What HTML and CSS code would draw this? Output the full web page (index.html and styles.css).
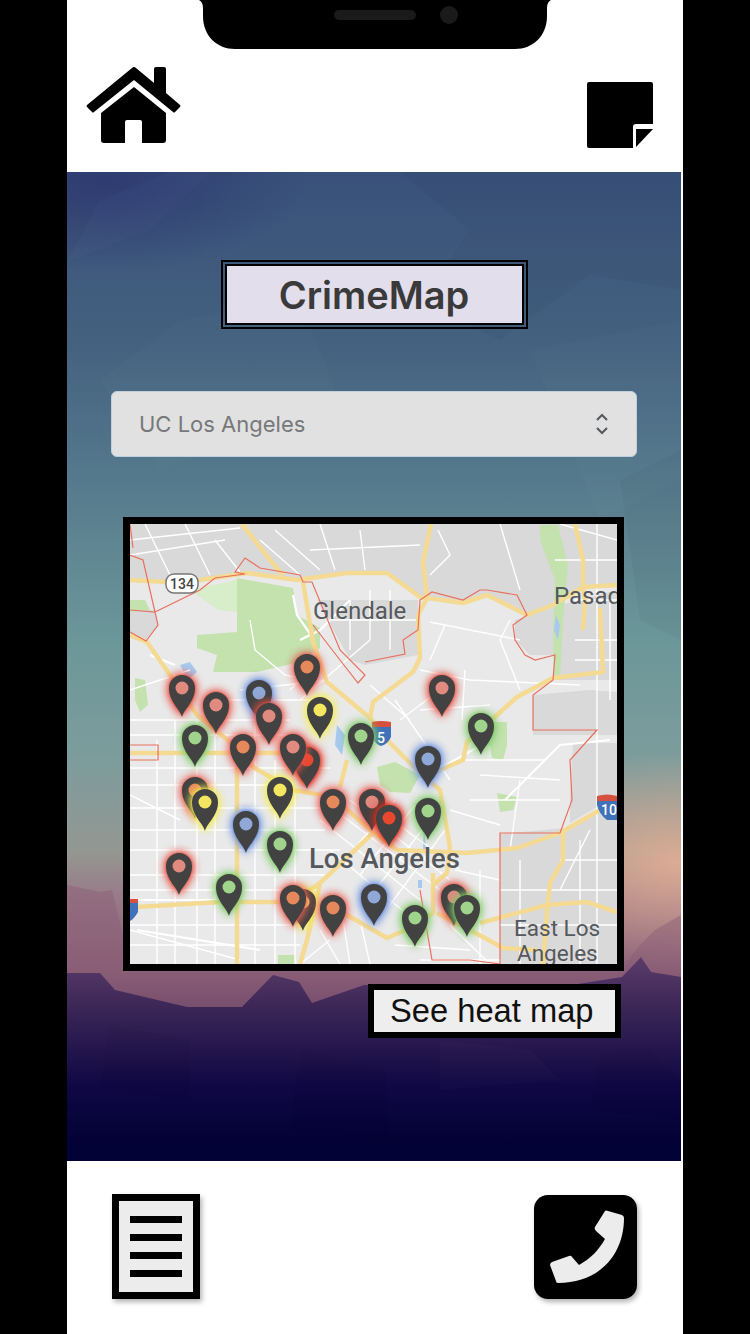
FILE: index.html
```html
<html>
  <head>
    <title>CrimeMap</title>
    <link rel="stylesheet" href="styles.css">
  </head>
  <body>
    <div id="phone">
      <svg class="notch" viewBox="0 0 352 49">
        <path d="M0 0 H352 Q348 2 348 8 V16 C348 36 334 49 316 49 H36 C18 49 4 36 4 16 V8 Q4 2 0 0 Z"/>
        <rect class="notch-part" x="135" y="10" width="82" height="10" rx="5"/>
        <circle class="notch-part" cx="250" cy="15" r="9"/>
      </svg>

      <div class="topbar">
        <svg class="home-icon" viewBox="86 66 96 78">
          <path d="M132 68 Q134 66 136 68 L154 83 V69 Q154 67 156 67 H164 Q166 67 166 69 V93 L180 105 Q181 106 180 107 L175 112 Q174 113 173 112 L134 80 L94 112 Q93 113 92 112 L87 107 Q86 106 87 105 Z"/>
          <path d="M134 87 L166 113 V140 Q166 143 163 143 H142 V122 Q142 120 140 120 H127 Q125 120 125 122 V143 H104 Q101 143 101 140 V113 Z"/>
        </svg>
        <svg class="note-icon" viewBox="0 0 66 66">
          <path d="M2 0 H64 Q66 0 66 2 V42 H49 Q46 42 46 45 V66 H2 Q0 66 0 64 V2 Q0 0 2 0 Z"/>
          <path d="M49 47 H66 L49 65 Z"/>
        </svg>
      </div>

      <div class="main">
        <!-- low poly backdrop -->
        <svg class="backdrop" viewBox="67 172 614 989">
          <defs>
            <linearGradient id="dusk" gradientUnits="userSpaceOnUse" x1="0" y1="955" x2="0" y2="1140">
              <stop offset="0" stop-color="#5c3d6c"/>
              <stop offset="0.3" stop-color="#3a2555"/>
              <stop offset="0.7" stop-color="#100845"/>
              <stop offset="1" stop-color="#030236"/>
            </linearGradient>
          </defs>
          <path class="facet-light" d="M67 172 H210 L150 230 L67 262 Z"/>
          <path class="facet-dark" d="M67 172 H170 L100 200 L67 262 Z"/>
          <path class="facet-dark" d="M400 172 H681 V290 L590 275 L500 340 L420 300 L470 230 Z"/>
          <path class="facet-light" d="M180 320 L300 300 L340 400 L160 470 L100 380 Z"/>
          <path class="facet-light" d="M530 350 L681 320 V480 L600 520 Z"/>
          <path class="facet-dark" d="M620 480 L681 450 V640 L640 620 Z"/>
          <path class="mauve" d="M67 885 L100 892 L112 890 L123 935 V975 H67 Z"/>
          <path class="mauve" d="M625 965 L640 945 L655 930 L681 915 V985 H625 Z"/>
          <path fill="url(#dusk)" d="M67 973 L100 973 L115 990 L187 1007 L242 1007 L273 975 L299 982 L312 1003 L364 985 L540 990 L622 977 L641 957 L651 972 L681 977 V1161 H67 Z"/>
          <path class="facet-dark" d="M110 1025 L190 1040 L190 1100 L100 1090 Z"/>
          <path class="facet-dark" d="M300 1050 L385 1070 L390 1140 L290 1130 Z"/>
          <path class="facet-light" d="M440 1040 L530 1050 L560 1080 L440 1090 Z"/>
          <path class="facet-dark" d="M600 1055 L650 1050 L681 1080 V1120 L590 1110 Z"/>
        </svg>

        <h1 class="title">CrimeMap</h1>

        <div class="picker">
          <span>UC Los Angeles</span>
          <svg class="picker-arrows" viewBox="0 0 14 24">
            <path d="M2 8 L7 3 L12 8 M2 16 L7 21 L12 16"/>
          </svg>
        </div>

        <div class="map-block">
          <svg class="map" viewBox="130 524 487 440">
            <defs>
              <g id="pin">
                <path class="pin-body" d="M0 0 C-2 -8 -13 -15 -13 -29 A13 13 0 0 1 13 -29 C13 -15 2 -8 0 0 Z"/>
                <circle class="pin-hole" cx="0" cy="-29" r="6.5"/>
              </g>
            </defs>

            <!-- land -->
            <rect x="130" y="524" width="487" height="440" fill="#e9e9e9"/>
            <path class="zone" d="M130 524 H617 V585 L583 587 L553 605 L527 615 L487 595 L463 603 L420 597 L387 573 L347 573 L297 580 L247 573 L200 580 L130 580 Z"/>
            <path class="zone" d="M317 600 H418 V655 L365 665 L350 660 Z"/>
            <path class="zone" d="M130 610 H155 L158 625 L145 640 L130 632 Z"/>
            <path class="zone" d="M515 620 L530 615 L560 605 L617 590 V680 L553 680 L555 655 L530 655 L515 640 Z"/>
            <path class="zone" d="M533 695 L590 690 L617 692 V735 H533 Z"/>
            <path class="zone" d="M573 743 H617 V797 L597 807 L570 823 V797 Z"/>
            <path class="zone" d="M500 834 L565 828 L570 825 L617 800 V964 H500 Z"/>

            <!-- parks -->
            <path class="park" d="M237 578 L293 588 L297 615 L320 628 L320 648 L300 662 L257 672 L213 672 L217 655 L197 648 L197 635 L237 632 Z"/>
            <path class="park-light" d="M190 590 L237 580 L237 612 L218 610 Z"/>
            <path class="park" d="M130 600 L145 600 L150 610 L130 612 Z"/>
            <path class="park" d="M540 525 H558 L568 565 L563 620 L560 680 L554 680 L553 630 L555 580 L540 540 Z"/>
            <path class="park" d="M135 678 L145 680 L148 705 L140 712 L135 700 Z"/>
            <path class="park" d="M377 767 L395 762 L420 775 L410 793 L390 792 L380 785 Z"/>
            <path class="park" d="M497 793 L517 797 L513 810 L500 812 Z"/>
            <path class="park" d="M487 722 L507 722 L507 745 L488 745 Z"/>
            <path class="park" d="M490 745 L507 745 L503 760 L492 758 Z"/>
            <path class="park" d="M278 955 H295 V964 H278 Z"/>
            <path class="water" d="M180 665 L190 662 L197 672 L188 680 Z"/>
            <path class="water" d="M337 725 L345 735 L342 755 L335 745 Z"/>
            <path class="water" d="M556 615 L560 625 L558 640 L554 630 Z"/>
            <path class="water" d="M418 880 H422 V888 H418 Z M424 818 L426 850 L423 850 Z"/>

            <!-- streets -->
            <path class="street" d="M130 540 L240 528 M145 524 L170 575 M185 524 L210 575 M130 555 L225 540 M215 540 L240 572 M260 540 L300 575 M275 530 L320 570 M320 524 L335 570 M360 530 L365 570 M310 550 L420 545 M438 530 L450 555 L430 575 M500 524 L520 590 M560 524 L617 540 M555 560 H617 M597 524 V964 M610 600 V700 M575 600 H617 M575 640 H617 M575 660 H617 M350 600 V650 M370 590 V640 M390 590 V650 M330 620 H420"/>
            <path class="street" d="M250 620 L255 650 L285 675 L307 680 M130 690 L190 670 M420 670 L470 680 L580 685 M430 622 L520 640 M445 625 L430 660 M510 620 L500 640 L520 690 M465 670 L462 720 M420 710 L490 705 M400 720 L440 690 M320 660 L290 690 M300 700 L370 640 M395 700 L450 780 M370 685 L410 720 M210 700 H330 M240 690 L330 680"/>
            <path class="street" d="M130 768 H330 M130 785 H290 M130 808 H320 M130 830 H325 M130 850 H340 M130 875 H330 M130 890 H320 M130 925 H300 M130 945 H300 M157 740 V964 M175 720 V964 M197 720 V964 M215 720 V964 M255 720 V964 M275 760 V964 M295 790 V964 M130 720 H290 M130 735 H290 M130 795 L180 820 M130 930 L240 960"/>
            <path class="street" d="M320 820 L420 900 M335 810 L440 890 M350 800 L450 880 M365 800 L460 870 M330 850 L420 925 M395 800 L345 860 M415 805 L360 875 M430 820 L375 890 M445 830 L390 905 M340 900 L350 964 M360 920 L370 964 M395 945 L470 950 M420 960 H500 M460 760 L545 760 M480 775 L560 780 M520 780 L510 850 M470 800 H560 M450 810 L500 825 M480 870 V964 M520 860 V964 M560 860 H617 M500 890 H617 M500 925 H617 M580 840 V964 M455 870 L500 880 M450 925 L490 964 M330 940 L300 964 M320 930 L340 964 M590 830 L560 890"/>
            <path class="street-major" d="M300 640 L320 630 L350 600 M420 780 L490 740 M130 900 H240 M137 930 L260 950 M293 595 L297 615 L313 638 M175 665 L150 655 M505 800 L560 745 L610 740"/>

            <!-- freeways -->
            <g class="freeway">
              <path d="M130 580 L167 582 L200 580 L247 573 L297 580 L347 573 L387 573 L420 597 L463 603 L487 595 L527 615 L553 605 L583 587 L617 585"/>
              <path d="M242 524 L270 560 L283 575 M303 582 L313 642 L327 682 L370 718 L387 740 L420 773 L440 790 L450 847"/>
              <path d="M431 524 L423 562 L427 598 L418 615 L420 658 L413 672 L373 702 L370 718"/>
              <path d="M575 524 L583 560 L583 587 L585 600 L583 630 M600 608 L603 672 L553 678 L517 697 L497 715 L467 742 L463 760 L440 770 L427 777"/>
              <path d="M130 635 L147 642 L170 675 L197 715 L230 742 L253 767 L293 790 L333 797 L370 830 L397 850 L467 853 L517 848 L560 833 L600 810 L617 800"/>
              <path d="M130 753 H287 M237 767 V964 M347 760 L340 787"/>
              <path d="M137 907 L220 902 L293 902 L320 883 L373 833 M320 883 L307 940 L300 964"/>
              <path d="M333 907 L387 938 L413 927 L433 913 L433 873 M437 913 L483 937 L503 948 L537 950"/>
              <path d="M480 923 L547 905 L587 902 L617 912 M563 833 V860 L550 883 L547 913 L543 964 M450 847 L447 873 L433 885"/>
            </g>

            <!-- city limits -->
            <path class="limit" d="M130 555 L143 560 L155 612 L130 610 M155 612 L158 625 L146 641 L130 632 M155 612 L200 590 L215 578 L245 574 L235 572 L245 558 L260 568 L300 575 L303 582 L312 582 L340 650 L365 675 L358 683 L340 660 L313 625"/>
            <path class="limit" d="M365 662 L405 654 L403 640 L418 630 L420 600 L432 592 L463 600 L480 590 L487 590 L517 595 L527 615 L513 625 L515 640 L525 655 L535 660 L555 655 L553 680 L533 695 L533 730 L597 730 L570 760 L572 800 L560 833 H500 V964"/>
            <path class="limit" d="M130 745 H158 V760 H130 M130 524 L133 548 M420 890 L432 960 H470 L500 964"/>

            <!-- shields -->
            <rect class="shield" x="166" y="574" width="32" height="19" rx="8"/>
            <text class="shield-text" x="182" y="589">134</text>
            <path class="highway-blue" d="M372 727 H391 V737 Q388 744 381 746 Q375 744 372 737 Z"/>
            <path class="highway-red" d="M372 722 Q381 720 391 722 V727 H372 Z"/>
            <text class="highway-text" x="381" y="743">5</text>
            <path class="highway-blue" d="M597 800 H617 V820 H607 Q599 814 597 805 Z"/>
            <path class="highway-red" d="M597 796 Q607 793 617 796 V801 H597 Z"/>
            <text class="highway-text" x="609" y="815">10</text>
            <path class="highway-blue" d="M130 902 H138 V912 Q134 919 130 921 Z"/>
            <path class="highway-red" d="M130 899 H138 V903 H130 Z"/>

            <!-- place names -->
            <text class="place" x="313" y="619">Glendale</text>
            <text class="place" x="554" y="604">Pasad</text>
            <text class="place place-big" x="309" y="868">Los Angeles</text>
            <text class="place place-small" x="514" y="936">East Los</text>
            <text class="place place-small" x="517" y="961">Angeles</text>

            <!-- pins, back to front -->
            <use href="#pin" class="pin red" x="182" y="717"/>
            <use href="#pin" class="pin red" x="216" y="734"/>
            <use href="#pin" class="pin blue" x="259" y="722"/>
            <use href="#pin" class="pin red" x="269" y="745"/>
            <use href="#pin" class="pin orange" x="307" y="696"/>
            <use href="#pin" class="pin yellow" x="320" y="739"/>
            <use href="#pin" class="pin red" x="442" y="717"/>
            <use href="#pin" class="pin green" x="481" y="755"/>
            <use href="#pin" class="pin green" x="195" y="767"/>
            <use href="#pin" class="pin orange" x="243" y="776"/>
            <use href="#pin" class="pin hot" x="307" y="789"/>
            <use href="#pin" class="pin red" x="293" y="776"/>
            <use href="#pin" class="pin green" x="361" y="765"/>
            <use href="#pin" class="pin blue" x="428" y="788"/>
            <use href="#pin" class="pin orange" x="195" y="819"/>
            <use href="#pin" class="pin yellow" x="205" y="831"/>
            <use href="#pin" class="pin yellow" x="280" y="819"/>
            <use href="#pin" class="pin orange" x="333" y="831"/>
            <use href="#pin" class="pin red" x="372" y="831"/>
            <use href="#pin" class="pin hot" x="389" y="847"/>
            <use href="#pin" class="pin green" x="428" y="840"/>
            <use href="#pin" class="pin blue" x="246" y="853"/>
            <use href="#pin" class="pin green" x="280" y="873"/>
            <use href="#pin" class="pin red" x="179" y="895"/>
            <use href="#pin" class="pin green" x="229" y="916"/>
            <use href="#pin" class="pin yellow" x="303" y="931"/>
            <use href="#pin" class="pin orange" x="293" y="927"/>
            <use href="#pin" class="pin orange" x="333" y="937"/>
            <use href="#pin" class="pin blue" x="374" y="926"/>
            <use href="#pin" class="pin green" x="415" y="947"/>
            <use href="#pin" class="pin red" x="454" y="926"/>
            <use href="#pin" class="pin green" x="467" y="937"/>
          </svg>
          <div class="heat-btn">See heat map</div>
        </div>
      </div>

      <div class="bottombar">
        <div class="doc-icon">
          <span></span>
          <span></span>
          <span></span>
          <span></span>
        </div>
        <div class="call-icon">
          <svg viewBox="0 0 103 104">
            <path d="M71 16 Q72 15 74 16 L88 20 Q90 21 90 23 C90 60 65 88 24 88 Q22 88 22 86 L16 70 Q16 68 18 67 L35 61 Q37 60 38 62 L45 70 C56 64 65 55 71 44 L62 36 Q60 34 61 32 Z"/>
          </svg>
        </div>
      </div>
    </div>
  </body>
</html>
```

FILE: styles.css
```css
html, body {margin: 0; padding: 0; background-color: #000;}
body {font-family: "Liberation Sans", Arial, sans-serif;}

#phone {
  position: relative;
  width: 616px;
  height: 1334px;
  margin: 0 auto;
  background-color: #fff;
  overflow: hidden;
}

/* notch sits over the top bar */
.notch {
  position: absolute;
  top: 0;
  left: 132px;
  width: 352px;
  height: 49px;
  fill: #000;
}
.notch-part {fill: #1a1a1a;}

.topbar {
  height: 172px;
  box-sizing: border-box;
  padding: 66px 30px 0 19px;
  display: flex;
  justify-content: space-between;
  align-items: flex-start;
}
.home-icon {width: 96px; height: 78px;}
.note-icon {width: 66px; height: 66px; margin-top: 16px;}

.main {
  position: relative;
  width: 614px;
  height: 989px;
  box-sizing: border-box;
  padding-top: 88px;
  display: flex;
  flex-direction: column;
  align-items: center;
  border-bottom: 1px solid #5c5f88;
  background-image:
    radial-gradient(ellipse 190px 110px at 610px 690px, rgba(232, 176, 148, 0.85), rgba(232, 176, 148, 0) 100%),
    radial-gradient(ellipse 200px 90px at 40px 10px, rgba(40, 50, 112, 0.7), rgba(40, 50, 112, 0) 100%),
    linear-gradient(180deg, #39517a 0, #44617f 170px, #54788c 300px, #6c9799 470px, #7d9c9c 590px, #949792 680px, #997a88 725px, #8a5d76 800px, #6a4468 860px);
}
.backdrop {
  position: absolute;
  top: 0;
  left: 0;
  width: 614px;
  height: 989px;
}
.facet-light {fill: #fff; opacity: 0.015;}
.facet-dark {fill: #000; opacity: 0.03;}
.mauve {fill: #8a5d76; opacity: 0.45;}

.title {
  position: relative;
  width: 307px;
  height: 69px;
  box-sizing: border-box;
  margin: 0;
  border: 6px double #000;
  background-color: #e2deec;
  background-clip: padding-box;
  color: #3a3a3a;
  font-family: Inter, sans-serif;
  font-size: 38px;
  font-weight: 600;
  line-height: 59px;
  text-align: center;
}

.picker {
  position: relative;
  width: 526px;
  height: 66px;
  box-sizing: border-box;
  margin-top: 62px;
  padding: 0 27px;
  display: flex;
  align-items: center;
  justify-content: space-between;
  background-color: #e1e1e1;
  border: 1px solid #c0d0dc;
  border-radius: 6px;
  color: #77787a;
  font-family: Inter, sans-serif;
  font-size: 22px;
}
.picker-arrows {
  width: 14px;
  height: 24px;
  fill: none;
  stroke: #55585c;
  stroke-width: 2;
}

.map-block {
  position: relative;
  width: 501px;
  margin: 60px 1px 0 0;
  display: flex;
  flex-direction: column;
}
.map {
  display: block;
  width: 487px;
  height: 440px;
  border: 7px solid #000;
}

.zone {fill: #d9d9d9;}
.park {fill: #c3e2ae;}
.park-light {fill: #d8edca;}
.water {fill: #a8c8ee;}
.street {fill: none; stroke: #fff; stroke-width: 1.4;}
.street-major {fill: none; stroke: #fff; stroke-width: 2.2;}
.freeway path {fill: none; stroke: #f4da92; stroke-width: 4.5; stroke-linejoin: round;}
.limit {fill: none; stroke: #e8705f; stroke-width: 1.2;}

.shield {fill: #fff; stroke: #777; stroke-width: 1.5;}
.shield-text {
  font-family: Roboto, sans-serif;
  font-size: 14px;
  font-weight: 500;
  fill: #444;
  text-anchor: middle;
}
.highway-blue {fill: #3f72b8;}
.highway-red {fill: #d6503f;}
.highway-text {
  font-family: Roboto, sans-serif;
  font-size: 14px;
  font-weight: 500;
  fill: #fff;
  text-anchor: middle;
}
.place {
  font-family: Roboto, sans-serif;
  font-size: 24px;
  fill: #55585c;
}
.place-big {font-size: 27.5px; font-weight: 500;}
.place-small {font-size: 22.5px;}

.pin-body {fill: #424242;}
.pin-hole {fill: currentColor;}
.pin.red {color: #e08a80; filter: drop-shadow(0 0 5px #e8483c) drop-shadow(0 0 1px #e8584c);}
.pin.hot {color: #e8482e; filter: drop-shadow(0 0 5px #e02a18) drop-shadow(0 0 2px #e02a18);}
.pin.orange {color: #e5885c; filter: drop-shadow(0 0 5px #e8584c) drop-shadow(0 0 1px #e8685c);}
.pin.yellow {color: #f4e660; filter: drop-shadow(0 0 5px #f2ec50) drop-shadow(0 0 1px #f2ec50);}
.pin.green {color: #a0d38c; filter: drop-shadow(0 0 5px #78c860) drop-shadow(0 0 1px #84cc6c);}
.pin.blue {color: #90a8d8; filter: drop-shadow(0 0 5px #6088dc) drop-shadow(0 0 1px #6c90dc);}

.heat-btn {
  width: 253px;
  height: 54px;
  box-sizing: border-box;
  margin: 13px 3px 0 auto;
  padding-left: 16px;
  border: 6px solid #000;
  background-color: #eee;
  color: #111;
  font-size: 32.7px;
  line-height: 42px;
}

.bottombar {
  height: 173px;
  box-sizing: border-box;
  padding: 33px 46px 0 45px;
  display: flex;
  justify-content: space-between;
  align-items: flex-start;
}
.doc-icon {
  width: 88px;
  height: 105px;
  box-sizing: border-box;
  padding: 15px 11px 0;
  border: 7px solid #000;
  background-color: #ececec;
  box-shadow: 2px 3px 5px rgba(0, 0, 0, 0.3);
  display: flex;
  flex-direction: column;
  gap: 11px;
}
.doc-icon span {display: block; height: 7px; background-color: #000;}
.call-icon {
  width: 103px;
  height: 104px;
  margin-top: 1px;
  background-color: #000;
  border-radius: 14px;
  box-shadow: 2px 3px 5px rgba(0, 0, 0, 0.3);
}
.call-icon svg {display: block; width: 103px; height: 104px; fill: #ececec;}
```
